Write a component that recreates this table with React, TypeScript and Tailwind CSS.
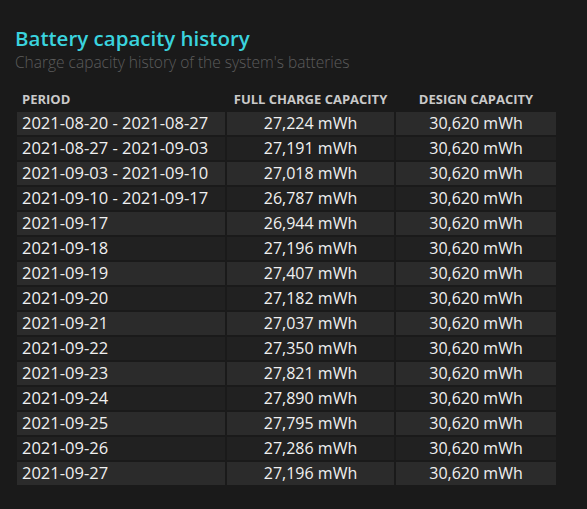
const rows: [string, string][] = [
  ["2021-08-20 - 2021-08-27", "27,224 mWh"],
  ["2021-08-27 - 2021-09-03", "27,191 mWh"],
  ["2021-09-03 - 2021-09-10", "27,018 mWh"],
  ["2021-09-10 - 2021-09-17", "26,787 mWh"],
  ["2021-09-17", "26,944 mWh"],
  ["2021-09-18", "27,196 mWh"],
  ["2021-09-19", "27,407 mWh"],
  ["2021-09-20", "27,182 mWh"],
  ["2021-09-21", "27,037 mWh"],
  ["2021-09-22", "27,350 mWh"],
  ["2021-09-23", "27,821 mWh"],
  ["2021-09-24", "27,890 mWh"],
  ["2021-09-25", "27,795 mWh"],
  ["2021-09-26", "27,286 mWh"],
  ["2021-09-27", "27,196 mWh"],
];

export default function App() {
  return (
    <div className="h-[509px] w-[587px] overflow-hidden bg-[#1a1a1a] px-[15px] pt-[24px] font-['Open_Sans',sans-serif]">
      <h1 className="text-[20.5px] font-semibold leading-[28px] text-[#3ad3de]">
        Battery capacity history
      </h1>
      <p className="text-[15.5px] font-light leading-[20px] text-[#5c5c5c]">
        Charge capacity history of the system's batteries
      </p>

      <table className="mt-[16px] border-separate border-spacing-[2px] text-[16.5px] text-[#f0f0f0]">
        <thead>
          <tr className="text-[13px] font-bold text-[#c9c9c9]">
            <th className="h-[18px] w-[208px] px-[5px] text-left font-bold">PERIOD</th>
            <th className="w-[167px] text-center font-bold">FULL CHARGE CAPACITY</th>
            <th className="w-[160px] text-center font-bold">DESIGN CAPACITY</th>
          </tr>
        </thead>
        <tbody>
          {rows.map(([period, full], i) => (
            <tr
              key={period}
              className={i % 2 === 0 ? "bg-[#2b2b2b]" : "bg-[#212121]"}
            >
              <td className="h-[23px] px-[5px] text-left leading-[20px]">{period}</td>
              <td className="text-center text-[16px] leading-[20px]">{full}</td>
              <td className="text-center text-[16px] leading-[20px]">30,620 mWh</td>
            </tr>
          ))}
        </tbody>
      </table>
    </div>
  );
}
